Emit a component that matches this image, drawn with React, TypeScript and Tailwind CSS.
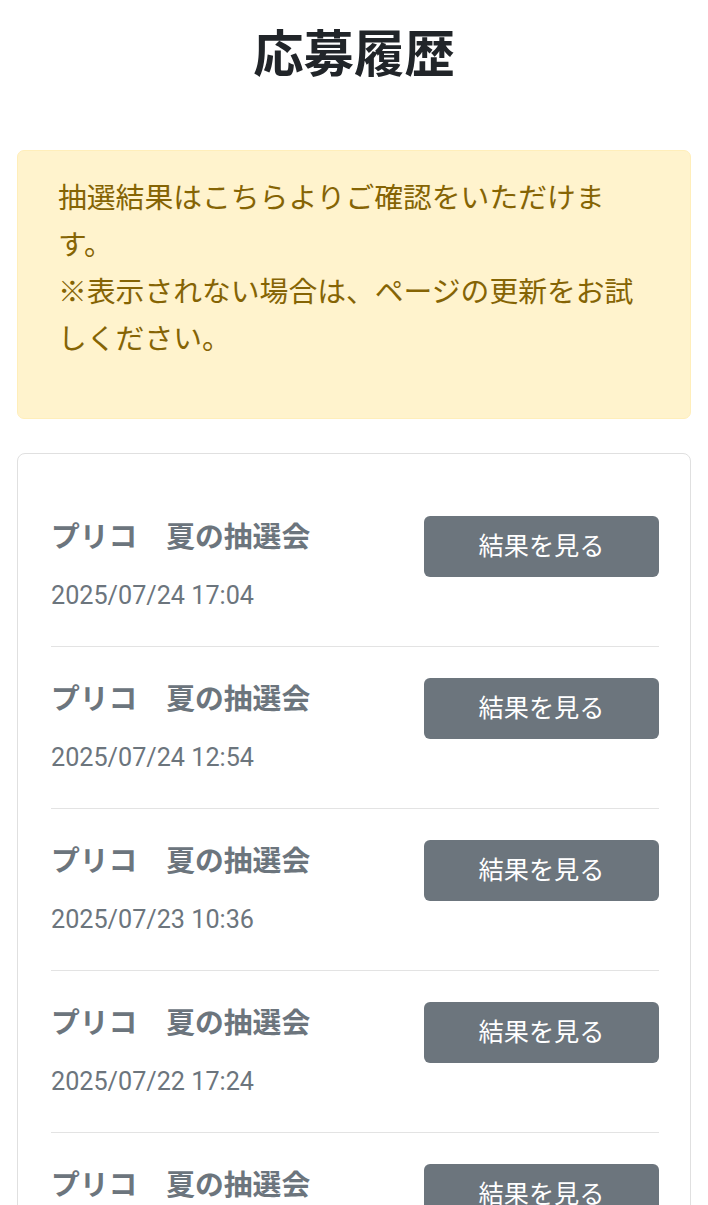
import React from "react";

const items = [
  { title: "プリコ　夏の抽選会", date: "2025/07/24 17:04" },
  { title: "プリコ　夏の抽選会", date: "2025/07/24 12:54" },
  { title: "プリコ　夏の抽選会", date: "2025/07/23 10:36" },
  { title: "プリコ　夏の抽選会", date: "2025/07/22 17:24" },
  { title: "プリコ　夏の抽選会", date: "2025/07/21 09:12" },
];

export default function App() {
  return (
    <div className="min-h-screen bg-white px-[17px] font-[family-name:Roboto,'Noto_Sans_CJK_JP',sans-serif]">
      <h1 className="pt-[25px] text-center text-[50.4px] font-bold leading-[60px] text-[#212529]">
        応募履歴
      </h1>

      <div className="mt-[65px] rounded-[7px] border-[1.8px] border-[#ffeeba] bg-[#fff3cd] px-[40px] pb-[54.8px] pt-[24px] text-[28.8px] leading-[47px] text-[#856404]">
        <p>
          抽選結果はこちらよりご確認をいただけます。
          <br />
          ※表示されない場合は、ページの更新をお試しください。
        </p>
      </div>

      <div className="mt-[34px] rounded-[8px] border-[1.8px] border-[#e0e0e0] bg-white pl-[33px] pr-[31px] pt-[31px]">
        {items.map((item, i) => (
          <div
            key={i}
            className="flex items-start justify-between border-b-[1.8px] border-[#e3e3e3] pb-[31.5px] pt-[31.5px]"
          >
            <div className="flex flex-col">
              <p className="text-[28.8px] font-bold leading-[43.2px] text-[#6c757d]">
                {item.title}
              </p>
              <p className="mt-[17px] text-[25.2px] leading-[37.8px] text-[#6c757d]">
                {item.date}
              </p>
            </div>
            <button
              type="button"
              className="flex h-[60.5px] w-[235px] items-center justify-center rounded-[6px] bg-[#6c757d] text-[25.2px] leading-[37.8px] text-white"
            >
              結果を見る
            </button>
          </div>
        ))}
      </div>
    </div>
  );
}
